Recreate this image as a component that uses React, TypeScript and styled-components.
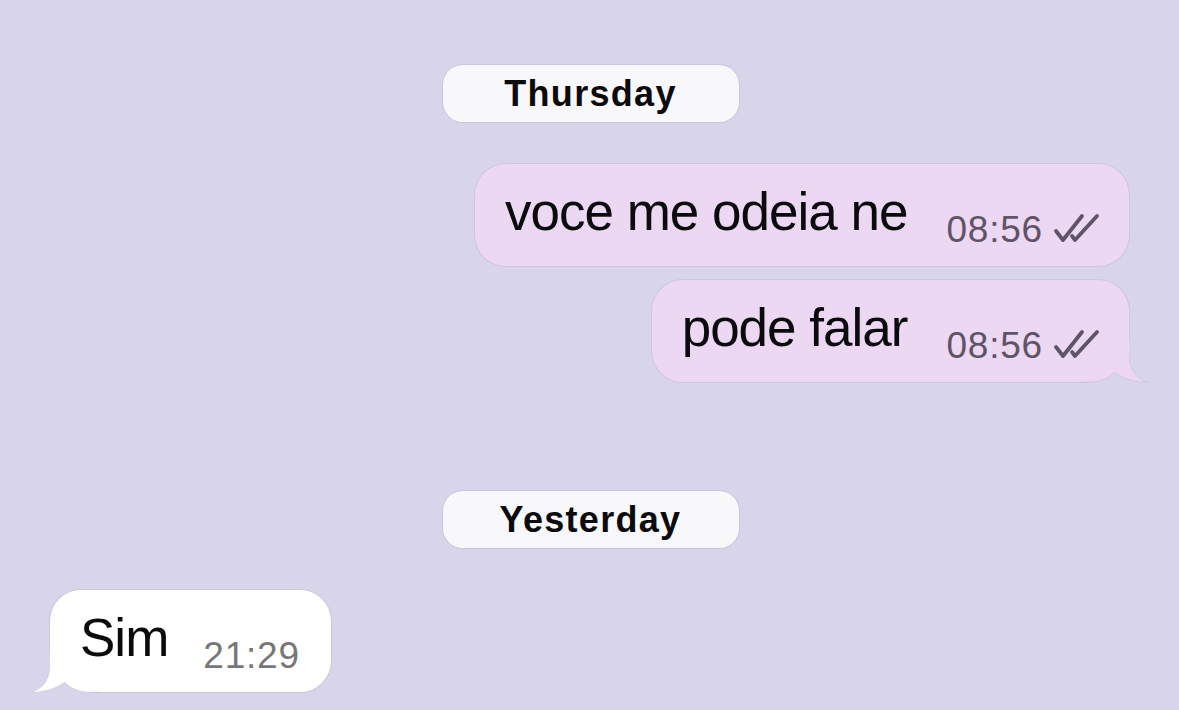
import styled, { createGlobalStyle } from "styled-components"

const colors = {
    background: "#d8d4ea",
    outgoing: "#ecd8f3",
    incoming: "#ffffff",
    pill: "#f8f8fb",
    text: "#0b0b0d",
    metaOut: "#5f5368",
    metaIn: "#777779",
    edge: "rgba(120, 100, 150, 0.12)",
}

const GlobalStyle = createGlobalStyle`
    html, body {
        margin: 0;
        padding: 0;
        background: ${colors.background};
    }
    body {
        font-family: "Liberation Sans", Arial, sans-serif;
    }
`

type Message = {
    text: string
    time: string
    outgoing: boolean
    tail?: boolean
}

type Day = {
    label: string
    messages: Message[]
}

const days: Day[] = [
    {
        label: "Thursday",
        messages: [
            { text: "voce me odeia ne", time: "08:56", outgoing: true },
            { text: "pode falar", time: "08:56", outgoing: true, tail: true },
        ],
    },
    {
        label: "Yesterday",
        messages: [{ text: "Sim", time: "21:29", outgoing: false, tail: true }],
    },
]

const ReadChecks = () => (
    <svg width="47" height="30" viewBox="0 0 47 30" fill="none">
        <path d="M3 18 L10 27 L29 3" stroke={colors.metaOut} strokeWidth="3.8" strokeLinecap="round" strokeLinejoin="round" />
        <path d="M19 23 L22 27 L44 3" stroke={colors.metaOut} strokeWidth="3.8" strokeLinecap="round" strokeLinejoin="round" />
    </svg>
)

// corner piece with the little hook, painted under the text over the rounded corner
const BubbleTail = ({ outgoing }: { outgoing: boolean }) => (
    <Tail $outgoing={outgoing} width="68" height="48" viewBox="0 0 68 48">
        <path
            d="M0 0 H50 V20 C50 35 56 44 68 48 C58 48.5 44 45 35 38 C30 44 22 47.5 12 48 H0 Z"
            fill={outgoing ? colors.outgoing : colors.incoming}
        />
        <path
            d="M50 20 C50 35 56 44 68 48 C58 48.5 44 45 35 38 C30 44 22 47.5 12 48 H0"
            fill="none"
            stroke={colors.edge}
            strokeWidth="1"
        />
    </Tail>
)

export default function App() {
    return (
        <>
            <GlobalStyle />
            <Chat>
                {days.map((day, d) => (
                    <DayGroup key={day.label} $first={d === 0}>
                        <DayPill>{day.label}</DayPill>
                        <Messages>
                            {day.messages.map((m, i) => (
                                <Bubble key={i} $outgoing={m.outgoing} $tail={!!m.tail}>
                                    {m.tail && <BubbleTail outgoing={m.outgoing} />}
                                    <BubbleText>{m.text}</BubbleText>
                                    <Meta $outgoing={m.outgoing}>
                                        <Time>{m.time}</Time>
                                        {m.outgoing && <ReadChecks />}
                                    </Meta>
                                </Bubble>
                            ))}
                        </Messages>
                    </DayGroup>
                ))}
            </Chat>
        </>
    )
}

const Chat = styled.main`
    width: 1179px;
    height: 710px;
    box-sizing: border-box;
    padding: 65px 50px 0;
    display: flex;
    flex-direction: column;
    overflow: hidden;
    background: ${colors.background};
`

const DayGroup = styled.section<{ $first: boolean }>`
    display: flex;
    flex-direction: column;
    gap: 42px;
    margin-top: ${(p) => (p.$first ? 0 : 109)}px;
`

const DayPill = styled.div`
    align-self: center;
    width: 296px;
    height: 57px;
    box-sizing: border-box;
    display: flex;
    align-items: center;
    justify-content: center;
    border-radius: 20px;
    background: ${colors.pill};
    box-shadow: 0 0 0 1px ${colors.edge};
    font-size: 36px;
    font-weight: 700;
    letter-spacing: 1.3px;
    color: ${colors.text};
    transform: translateX(1px);
`

const Messages = styled.div`
    display: flex;
    flex-direction: column;
    gap: 14px;
`

const Bubble = styled.div<{ $outgoing: boolean; $tail: boolean }>`
    position: relative;
    align-self: ${(p) => (p.$outgoing ? "flex-end" : "flex-start")};
    height: 102px;
    box-sizing: border-box;
    display: flex;
    align-items: flex-end;
    padding: ${(p) => (p.$outgoing ? "0 29px 16px 30px" : "0 31px 16px 30px")};
    border-radius: 31px;
    ${(p) => p.$tail && (p.$outgoing ? "border-bottom-right-radius: 48px;" : "border-bottom-left-radius: 48px;")}
    background: ${(p) => (p.$outgoing ? colors.outgoing : colors.incoming)};
    box-shadow: 0 0 0 1px ${colors.edge};
`

const BubbleText = styled.span`
    position: relative;
    z-index: 1;
    align-self: flex-start;
    margin-top: 18px;
    font-size: 53px;
    line-height: 60px;
    letter-spacing: -1px;
    color: ${colors.text};
    white-space: nowrap;
`

const Meta = styled.span<{ $outgoing: boolean }>`
    position: relative;
    z-index: 1;
    display: flex;
    align-items: center;
    gap: 10px;
    margin-left: ${(p) => (p.$outgoing ? 39 : 35)}px;
    color: ${(p) => (p.$outgoing ? colors.metaOut : colors.metaIn)};

    svg {
        margin-top: -4px;
    }
`

const Time = styled.span`
    font-size: 37px;
    line-height: 40px;
    letter-spacing: 0.8px;
`

const Tail = styled.svg<{ $outgoing: boolean }>`
    position: absolute;
    bottom: 0;
    ${(p) => (p.$outgoing ? "right: -18px;" : "left: -18px; transform: scaleX(-1);")}
    overflow: visible;
`
